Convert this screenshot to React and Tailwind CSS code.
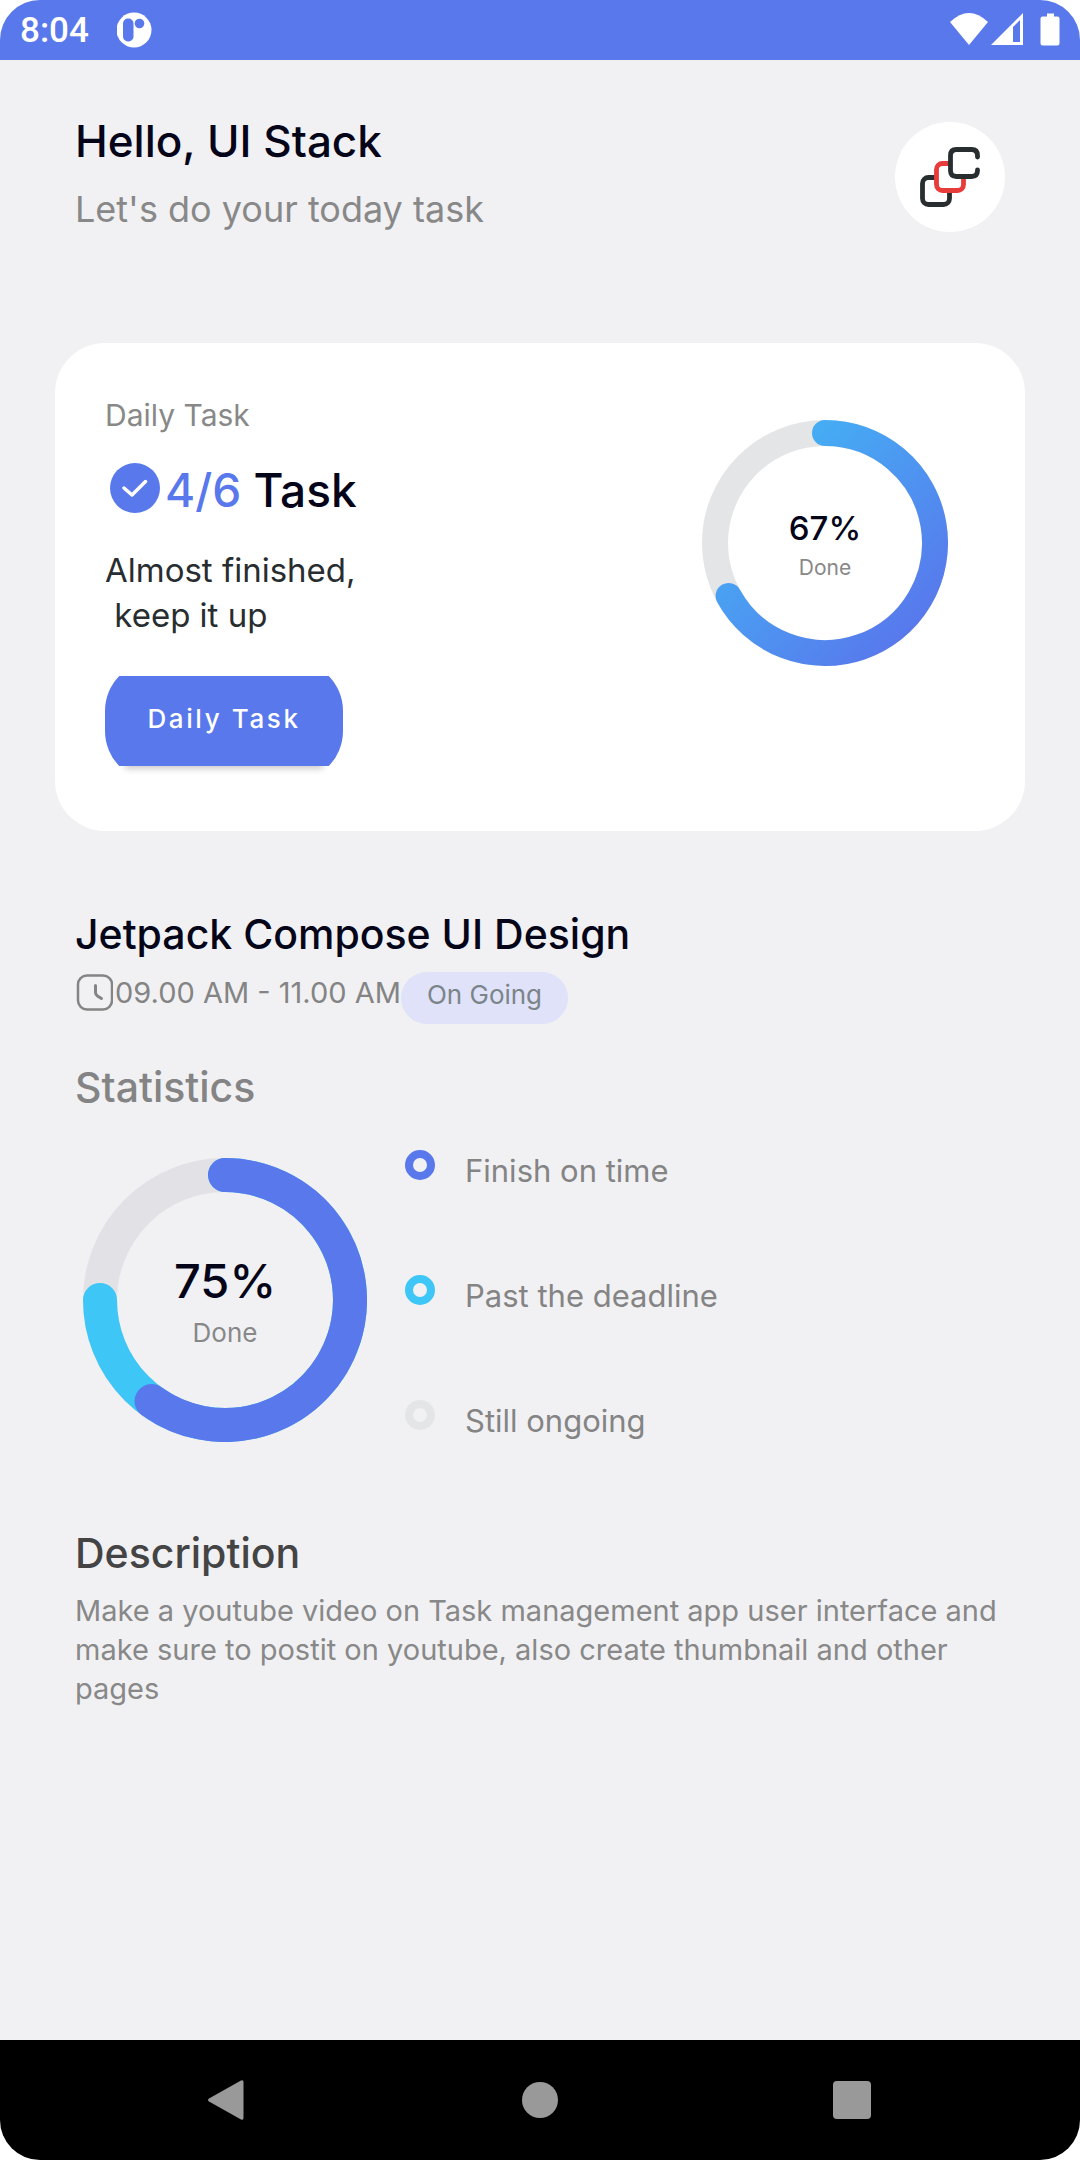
import React from "react";

function StatusBar() {
  return (
    <div className="flex h-[60px] items-center justify-between bg-[#5878ec] px-5 text-white">
      <div className="flex items-center gap-7">
        <span className="pt-0.5 font-[Roboto,sans-serif] text-[35px] leading-[58px] font-medium">8:04</span>
        <svg className="size-9" viewBox="0 0 36 36" aria-hidden="true">
          <circle cx="17" cy="18" r="17.500" fill="#fff" />
          <rect x="6" y="6.500" width="10.500" height="23" rx="5" fill="#5878ec" />
          <circle cx="22.500" cy="11.500" r="4.800" fill="#5878ec" />
        </svg>
      </div>
      <svg className="h-[34px] w-[110px]" viewBox="0 0 110 34" aria-hidden="true">
        <path d="M0 9 Q19 -9 38 9 L19 32 Z" fill="#fff" />
        <path fillRule="evenodd" d="M41 32 L73 0 V32 Z M63 14 L70 7 V29 H63 Z" fill="#fff" />
        <path
          d="M97 0.500 h7 v3 h3.500 q2 0 2 2 v25 q0 2 -2 2 h-15 q-2 0 -2 -2 v-25 q0 -2 2 -2 h4.500 z"
          fill="#fff"
        />
      </svg>
    </div>
  );
}

function Avatar() {
  return (
    <svg className="mt-3 size-[110px] shrink-0" viewBox="0 0 110 110" role="img" aria-label="UI Stack">
      <circle cx="55" cy="55" r="55" fill="#fff" />
      <g fill="none" strokeWidth="4.800" strokeLinecap="round" strokeLinejoin="round">
        <rect x="27.500" y="55.500" width="27" height="27" rx="6" stroke="#282d30" />
        <rect x="41.500" y="41.500" width="27" height="27" rx="6" stroke="#e73c3a" fill="#fff" />
        <path
          d="M82.500 35 v-1.500 q0 -6 -6 -6 h-15 q-6 0 -6 6 v15 q0 6 6 6 h15 q6 0 6 -6 v-0.500"
          stroke="#282d30"
          fill="#fff"
        />
      </g>
    </svg>
  );
}

function Ring({ size, stroke, track, segments, gradient, children }) {
  const c = size / 2;
  const r = c - stroke / 2;
  return (
    <div className="grid shrink-0 place-items-center">
      <svg
        className="col-start-1 row-start-1"
        width={size}
        height={size}
        viewBox={`0 0 ${size} ${size}`}
        aria-hidden="true"
      >
        {gradient && (
          <defs>
            <linearGradient
              id="ringGradient"
              gradientUnits="userSpaceOnUse"
              x1={stroke / 2}
              y1={stroke / 2}
              x2={size - stroke / 2}
              y2={size - stroke / 2}
            >
              <stop offset="0" stopColor="#3fbdf5" />
              <stop offset="0.500" stopColor="#4d97f1" />
              <stop offset="0.900" stopColor="#5878ec" />
            </linearGradient>
          </defs>
        )}
        <circle cx={c} cy={c} r={r} fill="none" stroke={track} strokeWidth={stroke} />
        {segments.map((s) => {
          const a = (s.value / 100) * 2 * Math.PI;
          const x = c + r * Math.sin(a);
          const y = c - r * Math.cos(a);
          return (
            <path
              key={s.value}
              d={`M${c} ${c - r} A${r} ${r} 0 ${s.value > 50 ? 1 : 0} 1 ${x} ${y}`}
              fill="none"
              stroke={s.color}
              strokeWidth={stroke}
              strokeLinecap="round"
            />
          );
        })}
      </svg>
      <div className="col-start-1 row-start-1 flex flex-col items-center gap-0.5 pt-1">{children}</div>
    </div>
  );
}

function DailyCard() {
  return (
    <section className="mx-[55px] mt-[108px] flex justify-between rounded-[50px] bg-white px-[50px] pt-[50px] pb-[65px]">
      <div className="flex flex-col items-start">
        <p className="text-[30px] leading-[44px] text-[#888]">Daily Task</p>
        <div className="mt-5 flex items-center">
          <svg className="mb-1 size-[60px]" viewBox="0 0 60 60" aria-hidden="true">
            <circle cx="30" cy="30" r="25" fill="#5878ec" />
            <path
              d="M19 30 l8 7 l13.500 -13.500"
              fill="none"
              stroke="#fff"
              strokeWidth="3.500"
              strokeLinecap="round"
              strokeLinejoin="round"
            />
          </svg>
          <h2 className="text-[46px] leading-[66px] font-medium text-[#050519]">
            <span className="text-[#5878ec]">4/6</span> Task
          </h2>
        </div>
        <p className="mt-[25px] text-[33px] leading-[45px] whitespace-pre text-[#282d30]">
          {"Almost finished,\n keep it up"}
        </p>
        <button type="button" className="relative isolate mt-[38px] h-[90px] w-[238px] pb-1 text-[26px] leading-[84px] font-medium tracking-widest text-white">
          <span className="absolute inset-x-5 bottom-0 -z-20 h-4 shadow-[0_3px_6px_rgba(0,0,0,0.20)]" />
          <span className="absolute inset-0 -z-10 overflow-hidden">
            <span className="absolute inset-x-0 -inset-y-[15px] rounded-[50px] bg-[#5878ec]" />
          </span>
          Daily Task
        </button>
      </div>
      <div className="mt-[27px] mr-[27px]">
        <Ring
          size={246}
          stroke={26}
          track="#e3e5e7"
          gradient
          segments={[{ value: 67, color: "url(#ringGradient)" }]}
        >
          <span className="text-[33px] leading-[44px] font-medium text-[#050519]">67%</span>
          <span className="text-[21px] leading-[32px] text-[#888]">Done</span>
        </Ring>
      </div>
    </section>
  );
}

const legend = [
  { label: "Finish on time", ring: "border-[#5878ec]" },
  { label: "Past the deadline", ring: "border-[#3dc6f6]" },
  { label: "Still ongoing", ring: "border-[#e3e5e7]" },
];

function TaskDetails() {
  return (
    <section className="px-[75px] pt-[73px] pb-10">
      <h2 className="text-[41px] leading-[60px] font-medium text-[#050519]">Jetpack Compose UI Design</h2>
      <div className="mt-2 flex items-start">
        <div className="flex h-[42px] items-center gap-[2px] text-[29px] text-[#848484]">
          <svg className="size-[38px]" viewBox="0 0 38 38" fill="none" stroke="currentColor" strokeWidth="2.500" aria-hidden="true">
            <rect x="3" y="1.500" width="34" height="34" rx="9" />
            <path d="M20.500 11.500 v7 q0 2 2 3.500 l4 2.500" strokeWidth="3" strokeLinecap="round" />
          </svg>
          <time>09.00 AM - 11.00 AM</time>
        </div>
        <span className="rounded-full bg-[#e0e2f9] px-[26px] pb-[6px] text-[26px] leading-[46px] text-[#7b8589]">On Going</span>
      </div>

      <h3 className="mt-[33px] text-[41px] leading-[60px] font-medium text-[#848484]">Statistics</h3>
      <div className="mt-[33px] flex items-start">
        <div className="mt-2 mr-[38px] ml-2">
          <Ring
            size={284}
            stroke={34}
            track="#e2e2e6"
            segments={[
              { value: 75, color: "#3dc6f6" },
              { value: 60, color: "#5878ec" },
            ]}
          >
            <span className="text-[47px] leading-[60px] font-medium text-[#050519]">75%</span>
            <span className="text-[26px] leading-[40px] text-[#888]">Done</span>
          </Ring>
        </div>
        <ul className="flex flex-col gap-[83px]">
          {legend.map((item) => (
            <li key={item.label} className="flex items-start gap-[30px]">
              <span className={`size-[30px] rounded-full border-8 ${item.ring}`} />
              <span className="text-[31px] leading-[42px] text-[#848484]">{item.label}</span>
            </li>
          ))}
        </ul>
      </div>

      <h3 className="mt-[81px] text-[41px] leading-[60px] font-medium text-[#444]">Description</h3>
      <p className="mt-2 text-[29px] leading-[39px] text-[#888]">
        Make a youtube video on Task management app user interface and make sure to postit on youtube, also
        create thumbnail and other pages
      </p>
    </section>
  );
}

function NavBar() {
  return (
    <nav className="flex h-[120px] items-center justify-around bg-black pr-[71px] pl-[69px]">
      <button type="button" aria-label="Back">
        <svg className="size-10" viewBox="0 0 40 40" aria-hidden="true">
          <path d="M34 0.500 q2.500 -1 2.500 1.500 v36 q0 2.500 -2.500 1.500 l-32 -18 q-2 -1.500 0 -3 z" fill="#999" />
        </svg>
      </button>
      <button type="button" aria-label="Home" className="size-9 rounded-full bg-[#999]" />
      <button type="button" aria-label="Recents" className="size-[38px] rounded bg-[#999]" />
    </nav>
  );
}

export default function App() {
  return (
    <div className="min-h-screen bg-white font-[Inter,sans-serif]">
      <div className="flex min-h-screen flex-col overflow-hidden rounded-[40px] bg-[#f1f1f4]">
        <StatusBar />
        <main className="flex-1">
          <header className="flex items-start justify-between px-[75px] pt-[50px]">
            <div>
              <h1 className="text-[44px] leading-[62px] font-medium text-[#050519]">Hello, UI Stack</h1>
              <p className="mt-[11px] text-[36px] leading-[52px] text-[#888]">Let's do your today task</p>
            </div>
            <Avatar />
          </header>
          <DailyCard />
          <TaskDetails />
        </main>
        <NavBar />
      </div>
    </div>
  );
}
